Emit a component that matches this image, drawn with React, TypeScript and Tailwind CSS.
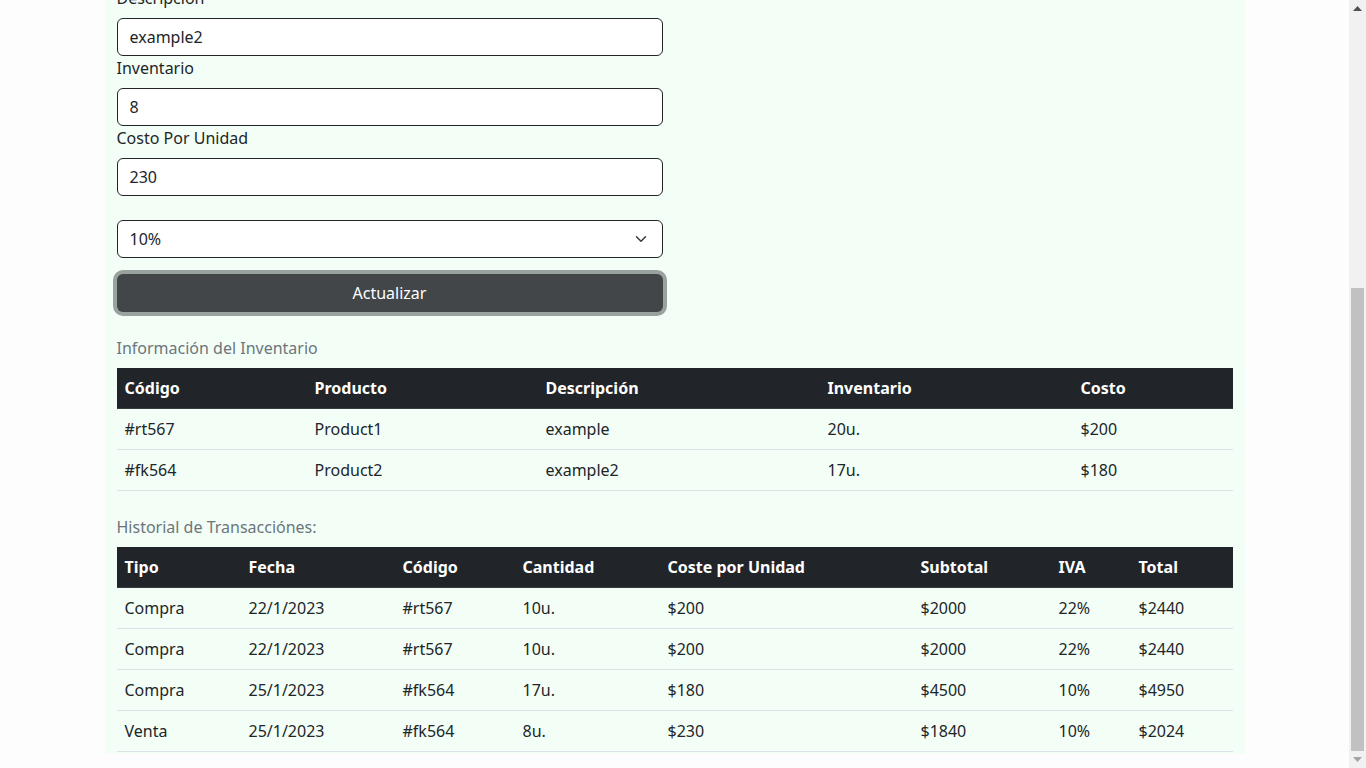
import React from "react";

const inv = [
  ["#rt567", "Product1", "example", "20u.", "$200"],
  ["#fk564", "Product2", "example2", "17u.", "$180"],
];
const invCols = [190, 231, 282, 253, 160];
const invHead = ["Código", "Producto", "Descripción", "Inventario", "Costo"];

const tx = [
  ["Compra", "22/1/2023", "#rt567", "10u.", "$200", "$2000", "22%", "$2440"],
  ["Compra", "22/1/2023", "#rt567", "10u.", "$200", "$2000", "22%", "$2440"],
  ["Compra", "25/1/2023", "#fk564", "17u.", "$180", "$4500", "10%", "$4950"],
  ["Venta", "25/1/2023", "#fk564", "8u.", "$230", "$1840", "10%", "$2024"],
];
const txCols = [124, 154, 120, 145, 253, 138, 80, 102];
const txHead = ["Tipo", "Fecha", "Código", "Cantidad", "Coste por Unidad", "Subtotal", "IVA", "Total"];

function Table({ caption, cols, head, rows }: { caption: string; cols: number[]; head: string[]; rows: string[][] }) {
  return (
    <div className="mb-4">
      <div className="py-2 leading-6 text-[#6c757d]">{caption}</div>
      <table className="w-full table-fixed border-separate border-spacing-0">
        <colgroup>
          {cols.map((w, i) => (
            <col key={i} style={{ width: w }} />
          ))}
        </colgroup>
        <thead>
          <tr className="bg-[#212529] text-white">
            {head.map((h, i) => (
              <th key={i} className="border-b border-[#373b3e] px-2 py-2 text-left font-bold leading-6">
                {h}
              </th>
            ))}
          </tr>
        </thead>
        <tbody>
          {rows.map((r, i) => (
            <tr key={i}>
              {r.map((c, j) => (
                <td key={j} className="border-b border-[#dee2e6] px-2 py-2 leading-6 text-[#212529]">
                  {c}
                </td>
              ))}
            </tr>
          ))}
        </tbody>
      </table>
    </div>
  );
}

function Field({ label, value }: { label: string; value: string }) {
  return (
    <div>
      <div className="mb-2 leading-6 text-[#212529]">{label}</div>
      <div className="flex h-[38px] items-center rounded-md border border-[#212529] bg-white px-3 text-[#212529]">{value}</div>
    </div>
  );
}

export default function App() {
  return (
    <div
      className="flex h-screen w-full overflow-hidden bg-[#fdfdfd] text-base"
      style={{ fontFamily: '"Noto Sans", "Open Sans", sans-serif' }}
    >
      <div className="flex-1 overflow-hidden">
        <div className="relative mx-auto h-full w-[1140px] bg-[#f3fff6] px-3">
          <div className="absolute left-[458px] top-0 flex h-px w-[242px]">
            <div className="h-px w-[48px] bg-[#2b97d8]" />
            <div className="h-px flex-1 bg-[#dee2e6]" />
          </div>
          <div className="-mt-[14px] w-[546px]">
            <Field label="Descripción" value="example2" />
            <Field label="Inventario" value="8" />
            <Field label="Costo Por Unidad" value="230" />
            <div className="mt-6 flex h-[38px] items-center justify-between rounded-md border border-[#212529] bg-white pl-3 pr-[15px] text-[#212529]">
              <span>10%</span>
              <svg width="12" height="12" viewBox="0 0 16 16" fill="none" stroke="#343a40" strokeWidth="2" strokeLinecap="round" strokeLinejoin="round">
                <path d="M2 5l6 6 6-6" />
              </svg>
            </div>
            <div className="mt-4 flex h-[38px] items-center justify-center rounded-md bg-[#424649] text-white shadow-[0_0_0_4px_rgba(66,70,73,0.5)]">
              Actualizar
            </div>
          </div>
          <div className="mt-4">
            <Table caption="Información del Inventario" cols={invCols} head={invHead} rows={inv} />
            <Table caption="Historial de Transacciónes:" cols={txCols} head={txHead} rows={tx} />
          </div>
        </div>
      </div>
      <div className="flex h-full w-[17px] flex-col bg-[#f1f1f1]">
        <div className="flex h-[17px] items-center justify-center">
          <svg width="9" height="5" viewBox="0 0 9 5"><path d="M4.5 0L9 5H0z" fill="#505050" /></svg>
        </div>
        <div className="flex-1 px-[2px]">
          <div className="mt-[271px] h-[463px] bg-[#c1c1c1]" />
        </div>
        <div className="flex h-[17px] items-center justify-center">
          <svg width="9" height="5" viewBox="0 0 9 5"><path d="M0 0H9L4.5 5z" fill="#a3a3a3" /></svg>
        </div>
      </div>
    </div>
  );
}
